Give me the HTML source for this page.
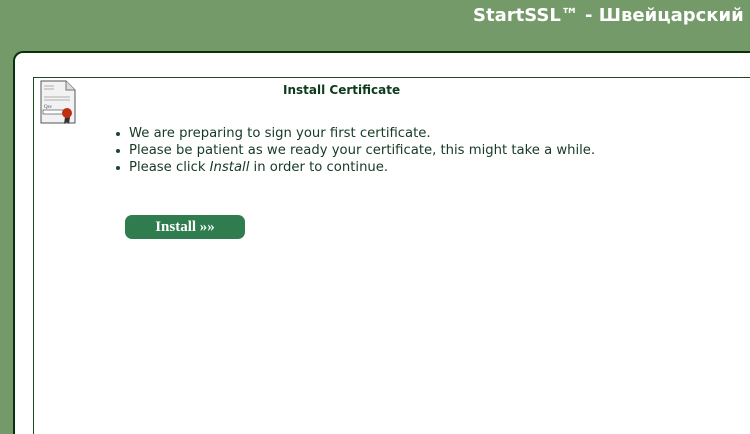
<!DOCTYPE html>
<html><head><meta charset="utf-8"><style>
html,body{margin:0;padding:0;width:750px;height:434px;overflow:hidden;background:#739a68;font-family:"DejaVu Sans",Verdana,sans-serif;}
#w{position:relative;width:750px;height:434px;overflow:hidden;}
.title{position:absolute;left:473px;top:5px;color:#fff;font-weight:bold;font-size:18px;white-space:nowrap;}
.panel{position:absolute;left:13px;top:51px;width:737px;height:381px;background:#fff;border:2px solid #0b300b;border-right:none;border-bottom:none;border-radius:10px 0 0 0;}
.inner{position:absolute;left:33px;top:77px;width:716px;height:356px;border:1px solid #1c4a1c;border-right:none;border-bottom:none;background:#fff;}
.h{position:absolute;left:283px;top:83px;font-weight:bold;font-size:12px;color:#0c3a1a;}
ul{position:absolute;left:94px;top:125px;margin:0;padding-left:35px;font-size:13.2px;line-height:17px;color:#163a26;list-style:none;white-space:nowrap;}
li{position:relative;}
li:before{content:"";position:absolute;left:-13px;top:7px;width:4px;height:4px;border-radius:50%;background:#1a4a2a;}
.btn{position:absolute;left:125px;top:215px;width:120px;height:24px;border-radius:7px;background:#2f7c4e;color:#fff;font-family:"Liberation Serif",serif;font-weight:bold;font-size:15px;text-align:center;line-height:24px;}
</style></head><body><div id="w">
<div class="title">StartSSL™ - Швейцарский</div>
<div class="panel"></div>
<div class="inner"></div>
<svg style="position:absolute;left:39px;top:79px" width="40" height="46" viewBox="0 0 40 46">
<path d="M2 2h25l9 9v33H2z" fill="#f2f2f2" stroke="#555" stroke-width="1"/>
<path d="M27 2v9h9" fill="#ddd" stroke="#777"/>
<path d="M5 7h10M5 10h10M5 18h26M5 21h26" stroke="#999" stroke-width="0.8"/>
<text x="5" y="29" font-size="5" fill="#447" font-family="Liberation Serif">Qsv</text>
<rect x="4" y="31" width="20" height="4" fill="#fff" stroke="#555" stroke-width="0.7"/>
<path d="M26 38l-1 7 3-2 2 2 1-7" fill="#333"/>
<circle cx="28" cy="34" r="5" fill="#c03010"/>
</svg>
<div class="h">Install Certificate</div>
<ul>
<li>We are preparing to sign your first certificate.</li>
<li>Please be patient as we ready your certificate, this might take a while.</li>
<li>Please click <i>Install</i> in order to continue.</li>
</ul>
<div class="btn">Install »»</div>
</div></body></html>
